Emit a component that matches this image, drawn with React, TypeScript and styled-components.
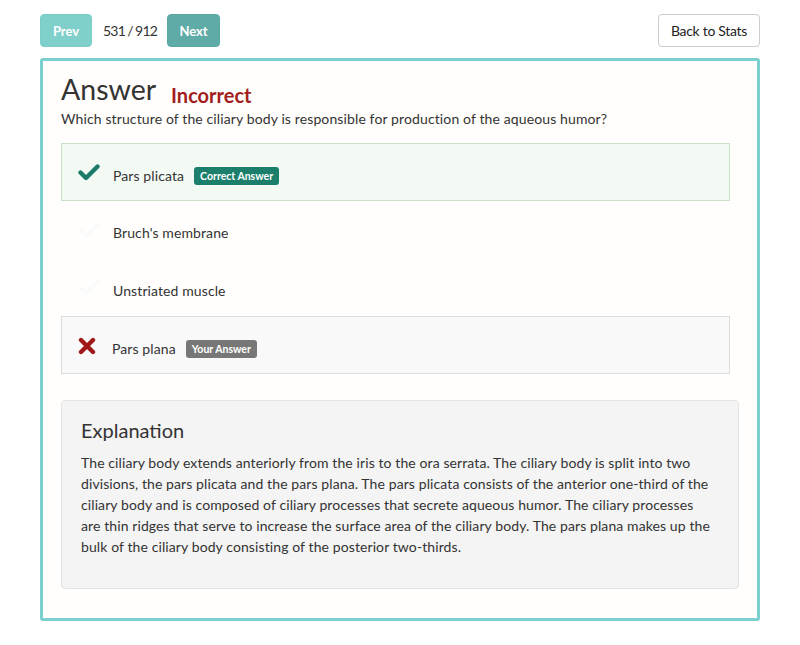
import React from "react";
import styled, { createGlobalStyle } from "styled-components";

const Global = createGlobalStyle`
  html, body { margin: 0; padding: 0; background: #ffffff; }
  body { font-family: Lato, "Open Sans", "Liberation Sans", sans-serif; color: #333; }
  * { box-sizing: border-box; }
`;

const Page = styled.div`
  padding: 14px 40px 0 40px;
  width: 800px;
`;

const TopBar = styled.div`
  display: flex;
  align-items: center;
  justify-content: space-between;
  height: 33px;
`;

const Nav = styled.div`
  display: flex;
  align-items: center;
`;

const NavButton = styled.button<{ $dim?: boolean }>`
  height: 33px;
  width: ${(p) => (p.$dim ? "52px" : "53px")};
  padding: 0;
  border: 1px solid ${(p) => (p.$dim ? "#7ccdc9" : "#5aa8a4")};
  background: ${(p) => (p.$dim ? "#7fcfcb" : "#5faba7")};
  color: #fff;
  font-family: inherit;
  font-weight: 700;
  font-size: 13px;
  border-radius: 4px;
  cursor: pointer;
`;

const Counter = styled.span`
  font-size: 14px;
  color: #333;
  padding: 0 10px 0 11px;
  word-spacing: -0.5px;
  letter-spacing: -0.8px;
`;

const BackButton = styled.button`
  height: 33px;
  width: 102px;
  padding: 0;
  border: 1px solid #ccc;
  background: #fff;
  color: #222;
  font-family: inherit;
  font-size: 14px;
  letter-spacing: -0.3px;
  border-radius: 4px;
`;

const Card = styled.div`
  margin-top: 11px;
  width: 720px;
  height: 563px;
  border: 3px solid #7ccfcf;
  border-radius: 3px;
  background: #fffefc;
  padding: 10px 18px 0 18px;
`;

const TitleRow = styled.div`
  display: flex;
  align-items: flex-end;
  gap: 15px;
`;

const Title = styled.h1`
  margin: 0;
  font-size: 28.5px;
  font-weight: 400;
  color: #333;
  line-height: 36px;
`;

const Verdict = styled.span`
  font-size: 20px;
  font-weight: 700;
  color: #a21d1d;
  line-height: 26px;
  margin-bottom: -1px;
`;

const Question = styled.p`
  margin: 2px 0 14px 0;
  font-size: 14px;
  line-height: 20px;
  letter-spacing: 0.12px;
  color: #333;
`;

const Options = styled.div`
  width: 669px;
  display: flex;
  flex-direction: column;
`;

const Option = styled.div<{ $kind?: "correct" | "wrong" | "plain" }>`
  height: ${(p) => (p.$kind === "plain" ? "57.5px" : "58px")};
  display: flex;
  align-items: center;
  padding-left: 16px;
  padding-top: 6px;
  border: 1px solid
    ${(p) =>
      p.$kind === "correct" ? "#c6e1c6" : p.$kind === "wrong" ? "#dcdcdc" : "transparent"};
  background: ${(p) =>
    p.$kind === "correct" ? "#f3faf3" : p.$kind === "wrong" ? "#f9f9f9" : "transparent"};
`;

const IconBox = styled.span<{ $w?: number; $lift?: number }>`
  width: ${(p) => p.$w ?? 35}px;
  display: flex;
  align-items: center;
  margin-top: ${(p) => -(p.$lift ?? 6)}px;
`;

const OptionText = styled.span`
  font-size: 14px;
  color: #333;
  letter-spacing: 0.1px;
`;

const Badge = styled.span<{ $tone: "green" | "grey" }>`
  margin-left: 10px;
  margin-top: 2px;
  display: inline-block;
  padding: 3px 6px 3px;
  border-radius: 3px;
  font-size: 10.5px;
  line-height: 12px;
  font-weight: 700;
  color: #fff;
  background: ${(p) => (p.$tone === "green" ? "#1b7f6b" : "#777777")};
`;

const Well = styled.div`
  margin-top: 26px;
  width: 678px;
  height: 189px;
  background: #f4f4f4;
  border: 1px solid #e3e3e3;
  border-radius: 4px;
  padding: 16px 19px;
`;

const WellTitle = styled.h3`
  margin: 0 0 9px 0;
  font-size: 20px;
  font-weight: 400;
  color: #333;
  line-height: 26px;
`;

const WellText = styled.p`
  margin: 0;
  font-size: 14px;
  line-height: 21px;
  letter-spacing: 0.1px;
  color: #333;
`;

const Check = ({ color }: { color: string }) => (
  <svg width="22" height="18" viewBox="0 0 22 18">
    <path d="M2.5 9.5 L8 15 L19.5 3.5" fill="none" stroke={color} strokeWidth="4.4" strokeLinecap="round" strokeLinejoin="round" />
  </svg>
);

const Cross = () => (
  <svg width="18" height="18" viewBox="0 0 18 18">
    <path d="M3 3 L15 15 M15 3 L3 15" fill="none" stroke="#a01818" strokeWidth="4.4" strokeLinecap="round" />
  </svg>
);

export default function App() {
  return (
    <>
      <Global />
      <Page>
        <TopBar>
          <Nav>
            <NavButton $dim>Prev</NavButton>
            <Counter>531 / 912</Counter>
            <NavButton>Next</NavButton>
          </Nav>
          <BackButton>Back to Stats</BackButton>
        </TopBar>
        <Card>
          <TitleRow>
            <Title>Answer</Title>
            <Verdict>Incorrect</Verdict>
          </TitleRow>
          <Question>Which structure of the ciliary body is responsible for production of the aqueous humor?</Question>
          <Options>
            <Option $kind="correct">
              <IconBox><Check color="#1c7a68" /></IconBox>
              <OptionText>Pars plicata</OptionText>
              <Badge $tone="green">Correct Answer</Badge>
            </Option>
            <Option $kind="plain">
              <IconBox><Check color="#fbfbfb" /></IconBox>
              <OptionText>Bruch's membrane</OptionText>
            </Option>
            <Option $kind="plain">
              <IconBox><Check color="#fbfbfb" /></IconBox>
              <OptionText>Unstriated muscle</OptionText>
            </Option>
            <Option $kind="wrong">
              <IconBox $w={34} $lift={4}><Cross /></IconBox>
              <OptionText>Pars plana</OptionText>
              <Badge $tone="grey">Your Answer</Badge>
            </Option>
          </Options>
          <Well>
            <WellTitle>Explanation</WellTitle>
            <WellText>
              The ciliary body extends anteriorly from the iris to the ora serrata. The ciliary body is split into two divisions, the pars plicata and the pars plana. The pars plicata consists of the anterior one-third of the ciliary body and is composed of ciliary processes that secrete aqueous humor. The ciliary processes are{"\u00a0"}thin ridges that serve to increase the surface area of the ciliary body. The pars plana makes up the bulk of the ciliary body consisting of the posterior two-thirds.
            </WellText>
          </Well>
        </Card>
      </Page>
    </>
  );
}
